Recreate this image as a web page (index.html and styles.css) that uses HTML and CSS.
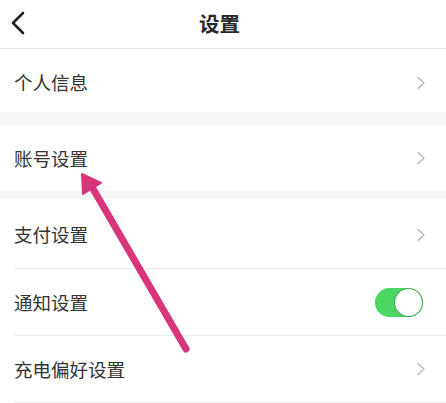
FILE: index.html
```html
<!DOCTYPE html>
<html lang="zh">
<head>
<meta charset="utf-8">
<link rel="stylesheet" href="styles.css">
</head>
<body>
<div class="page">
  <header class="header">
    <svg class="back" width="16" height="24" viewBox="0 0 16 24"><path d="M13 2 L3 12 L13 22" fill="none" stroke="#222" stroke-width="2.6" stroke-linecap="round" stroke-linejoin="round"/></svg>
    <div class="title">设置</div>
  </header>
  <div class="row r1"><span>个人信息</span><svg class="chev" width="10" height="14" viewBox="0 0 10 14"><path d="M2 1.5 L8 7 L2 12.5" fill="none" stroke="#bdbdbd" stroke-width="1.6" stroke-linecap="round" stroke-linejoin="round"/></svg></div>
  <div class="gap g1"></div>
  <div class="row r2"><span>账号设置</span><svg class="chev" width="10" height="14" viewBox="0 0 10 14"><path d="M2 1.5 L8 7 L2 12.5" fill="none" stroke="#bdbdbd" stroke-width="1.6" stroke-linecap="round" stroke-linejoin="round"/></svg></div>
  <div class="gap g2"></div>
  <div class="group">
    <div class="row r3 sep"><span>支付设置</span><svg class="chev" width="10" height="14" viewBox="0 0 10 14"><path d="M2 1.5 L8 7 L2 12.5" fill="none" stroke="#bdbdbd" stroke-width="1.6" stroke-linecap="round" stroke-linejoin="round"/></svg></div>
    <div class="row r4 sep"><span>通知设置</span><div class="toggle"><div class="knob"></div></div></div>
    <div class="row r5 sep"><span>充电偏好设置</span><svg class="chev" width="10" height="14" viewBox="0 0 10 14"><path d="M2 1.5 L8 7 L2 12.5" fill="none" stroke="#bdbdbd" stroke-width="1.6" stroke-linecap="round" stroke-linejoin="round"/></svg></div>
  </div>
  <svg class="arrow" width="446" height="403" viewBox="0 0 446 403">
    <line x1="186" y1="349" x2="92" y2="187" stroke="#d8357a" stroke-width="7" stroke-linecap="round"/>
    <polygon points="82,174 101,183 83,194" fill="#d8357a" stroke="#d8357a" stroke-width="2" stroke-linejoin="round"/>
  </svg>
</div>
</body>
</html>
```
FILE: styles.css
```css
html, body {
  margin: 0;
  padding: 0;
  background: #ffffff;
}
.page {
  position: relative;
  width: 446px;
  height: 403px;
  overflow: hidden;
  font-family: "Noto Sans CJK SC", "Noto Sans", sans-serif;
  color: #333333;
}
.header {
  height: 48px;
  border-bottom: 1px solid #e6e6e6;
  display: flex;
  align-items: center;
  justify-content: center;
  position: relative;
}
.back {
  position: absolute;
  left: 10px;
  top: 11px;
}
.title {
  font-size: 20.5px;
  font-weight: 700;
  color: #2a2a2a;
  margin-top: -2px;
  margin-right: 7px;
}
.row {
  display: flex;
  align-items: center;
  justify-content: space-between;
  padding: 0 20px 0 14px;
  font-size: 18.5px;
  color: #333333;
  box-sizing: border-box;
}
.row span { line-height: 1; }
.r1 { height: 63px; padding-top: 4px; }
.r2 { height: 66px; }
.r3 { height: 70px; padding-top: 2px; }
.r4 { height: 67px; }
.r5 { height: 67px; }
.sep { border-bottom: 1px solid #ececec; }
.group .row { margin-left: 14px; padding-left: 0; }
.gap { background: #f6f6f6; }
.g1 { height: 13px; }
.g2 { height: 8px; }
.toggle {
  width: 48px;
  height: 29px;
  border-radius: 15px;
  background: #4cd764;
  position: relative;
  margin-right: 3px;
}
.knob {
  position: absolute;
  right: 1px;
  top: 1px;
  width: 27px;
  height: 27px;
  border-radius: 50%;
  background: #ffffff;
  box-shadow: 0 0 0 1px rgba(60,120,60,0.5);
}
.arrow {
  position: absolute;
  left: 0;
  top: 0;
  pointer-events: none;
}
```
